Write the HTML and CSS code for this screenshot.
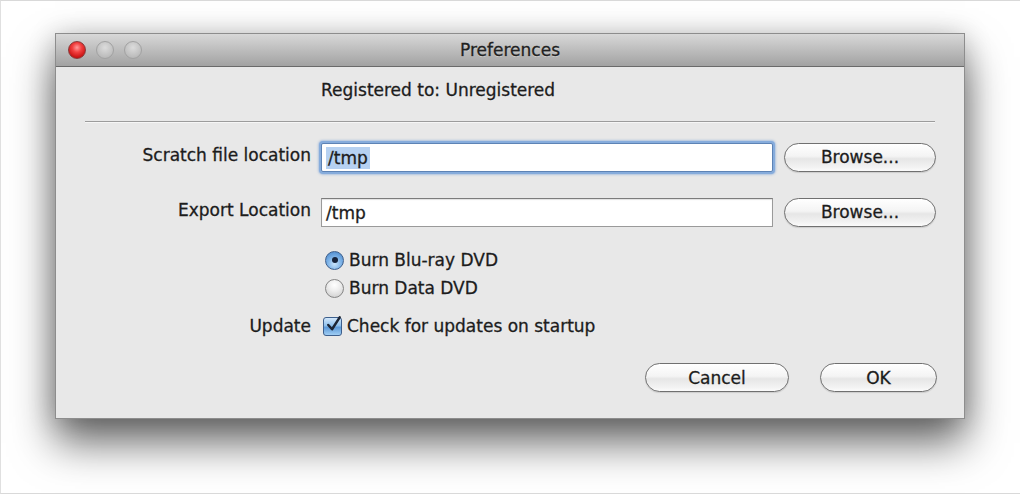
FILE: index.html
```html
<!DOCTYPE html>
<html>
<head>
<meta charset="utf-8">
<link rel="stylesheet" href="styles.css">
</head>
<body>
<div class="frame">
  <div class="window">
    <div class="titlebar">
      <div class="lights">
        <span class="light red"></span>
        <span class="light gray"></span>
        <span class="light gray"></span>
      </div>
      <div class="title">Preferences</div>
      <div></div>
    </div>
    <div class="content">
      <div class="reg">Registered to: Unregistered</div>
      <div class="sep"></div>
      <div class="row first">
        <div class="label">Scratch file location</div>
        <div class="field focused"><span class="sel">/tmp</span></div>
        <div class="btn browse">Browse...</div>
      </div>
      <div class="row second">
        <div class="label">Export Location</div>
        <div class="field"><span>/tmp</span></div>
        <div class="btn browse">Browse...</div>
      </div>
      <div class="opts">
        <div class="opt radio-row"><span class="radio on"></span>Burn Blu-ray DVD</div>
        <div class="opt radio-row"><span class="radio"></span>Burn Data DVD</div>
      </div>
      <div class="row upd">
        <div class="label">Update</div>
        <div class="opt check-row">
          <span class="check"><svg viewBox="0 0 20 20" width="19" height="19"><path d="M4.5 10.5 L8.5 15 L16.5 2.5" fill="none" stroke="#1c2534" stroke-width="2.6" stroke-linecap="round" stroke-linejoin="round"/></svg></span>Check for updates on startup
        </div>
      </div>
      <div class="actions">
        <div class="btn cancel">Cancel</div>
        <div class="btn ok">OK</div>
      </div>
    </div>
  </div>
</div>
</body>
</html>
```

FILE: styles.css
```css
* { box-sizing: border-box; }
html, body { margin: 0; padding: 0; background: #fff; }
body {
  font-family: "DejaVu Sans", "Liberation Sans", sans-serif;
  font-size: 17px;
  color: #1c1c1c;
  -webkit-text-stroke: 0.3px #1c1c1c;
}
.frame {
  width: 1020px;
  height: 494px;
  border-top: 1px solid #d9d9d9;
  border-left: 1px solid #e0e0e0;
  border-bottom: 1px solid #d9d9d9;
  padding: 32px 0 0 54px;
  overflow: hidden;
}
.window {
  width: 910px;
  height: 386px;
  background: #e8e8e8;
  border: 1px solid #8d8d8d;
  box-shadow: 0 24px 40px rgba(0,0,0,0.58), 0 2px 26px rgba(0,0,0,0.2);
  display: flex;
  flex-direction: column;
}
.titlebar {
  height: 33px;
  flex: none;
  background: linear-gradient(#d8d8d8, #bababa 55%, #a2a2a2);
  border-bottom: 1px solid #6a6a6a;
  display: grid;
  grid-template-columns: 1fr auto 1fr;
  align-items: center;
}
.lights { display: flex; gap: 10px; padding-left: 12px; }
.light {
  width: 18px; height: 18px; border-radius: 50%;
  display: block;
}
.light.red {
  background: radial-gradient(circle at 50% 35%, #ff9b9b 0, #f24040 35%, #c81212 75%, #9c0e0e 100%);
  border: 1px solid #8a3a3a;
}
.light.gray {
  background: radial-gradient(circle at 50% 35%, #dcdcdc 0, #c6c6c6 50%, #b0b0b0 100%);
  border: 1px solid #a2a2a2;
}
.title {
  font-size: 17px;
  color: #222;
  text-shadow: 0 1px 0 rgba(255,255,255,0.4);
}
.content {
  flex: 1;
  padding: 13px 0 0 0;
  display: flex;
  flex-direction: column;
}
.reg {
  line-height: 20px;
  padding-left: 265px;
}
.sep {
  margin: 21px 29px 0 29px;
  height: 2px;
  border-top: 1px solid #9c9c9c;
  border-bottom: 1px solid #f6f6f6;
}
.row {
  display: grid;
  grid-template-columns: 255px 452px 153px;
  column-gap: 10px;
  align-items: center;
}
.row > .btn { margin-left: 1px; }
.row.first { margin-top: 18px; height: 32px; }
.row.second { margin-top: 23px; height: 32px; }
.label {
  text-align: right;
  line-height: 20px;
  position: relative;
  top: -2px;
}
.field {
  height: 29px;
  background: #fff;
  border: 1px solid #9a9a9a;
  border-top-color: #7c7c7c;
  box-shadow: inset 0 1px 1px rgba(0,0,0,0.12);
  padding: 4px 0 0 4px;
  line-height: 20px;
}
.field.focused {
  border-color: #5d83b5;
  box-shadow: 0 0 0 2px #86acdc, 0 0 2px 3px rgba(120,160,215,0.5);
  border-radius: 2px;
}
.sel {
  background: #b6d1f1;
  padding: 1px 2px;
}
.btn {
  height: 29px;
  border: 1px solid #707070;
  border-radius: 15px;
  background: linear-gradient(#ffffff, #f4f4f4 45%, #e6e6e6 55%, #f2f2f2 85%, #fbfbfb);
  box-shadow: 0 1px 1px rgba(0,0,0,0.12);
  display: flex;
  align-items: center;
  justify-content: center;
}
.opts {
  margin-top: 18px;
  padding-left: 269px;
  display: flex;
  flex-direction: column;
}
.opt {
  height: 28px;
  display: flex;
  align-items: center;
}
.radio {
  width: 19px; height: 19px; border-radius: 50%;
  margin-right: 5px;
  background: radial-gradient(circle at 50% 30%, #ffffff 0, #eeeeee 40%, #c8c8c8 100%);
  border: 1px solid #858585;
  display: flex;
  align-items: center;
  justify-content: center;
}
.radio.on {
  background: radial-gradient(circle at 50% 70%, #c9e4fb 0, #7fb4e8 45%, #3f7fc6 100%);
  border-color: #3d5f8c;
}
.radio.on::after {
  content: "";
  width: 6px; height: 6px; border-radius: 50%;
  background: #16233a;
}
.row.upd { margin-top: 10px; height: 28px; }
.row.upd .label { top: 0; }
.check-row { padding-left: 2px; }
.check {
  width: 19px; height: 19px;
  margin-right: 5px;
  border-radius: 3px;
  border: 1px solid #3d5f8c;
  background: linear-gradient(#d2e7fb, #8fc0ec 45%, #5d9ad9 55%, #9fcdf3);
  display: block;
  position: relative;
}
.check svg { position: absolute; left: 0; top: -3px; }
.actions {
  margin-top: 23px;
  display: flex;
  justify-content: flex-end;
  gap: 31px;
  padding-right: 27px;
}
.cancel { width: 144px; }
.ok { width: 117px; }
```
